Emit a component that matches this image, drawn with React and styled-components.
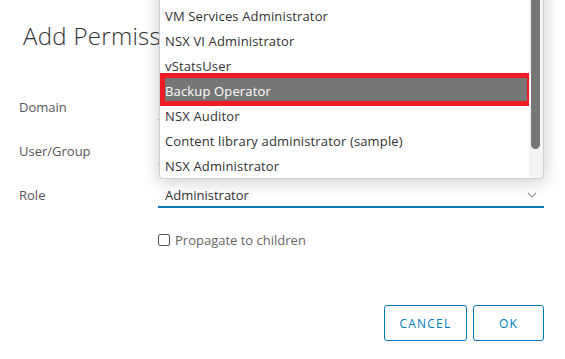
import React from "react";
import styled, { createGlobalStyle } from "styled-components";

const Global = createGlobalStyle`
  html, body { margin: 0; padding: 0; background: #ffffff; overflow: hidden; }
  body { font-family: "Open Sans", "Noto Sans", sans-serif; color: #333; }
  * { box-sizing: border-box; }
`;

const Dialog = styled.div`
  width: 565px;
  height: 359px;
  background: #fff;
  padding: 20px 21px 18px 19px;
  display: flex;
  flex-direction: column;
`;

const Title = styled.h2`
  margin: 0 0 0 4px;
  font-size: 24px;
  line-height: 32px;
  font-weight: 300;
  color: #313131;
  letter-spacing: 0.3px;
`;

const Form = styled.div`
  margin-top: 33px;
  display: grid;
  grid-template-columns: 139px 386px;
  grid-auto-rows: 44px;
`;

const Label = styled.div`
  font-size: 13px;
  color: #565656;
  display: flex;
  align-items: center;
`;

const Field = styled.div`
  position: relative;
  display: flex;
  align-items: center;
`;

const Select = styled.div`
  width: 100%;
  height: 24px;
  margin-top: 2px;
  display: flex;
  align-items: center;
  justify-content: space-between;
  padding: 0 7px 0 7px;
  font-size: 13px;
  color: #313131;
  border-bottom: ${(p) => (p.$active ? "2px solid #0079b8" : "1px solid #b3b3b3")};
`;

const Chevron = () => (
  <svg width="10" height="6" viewBox="0 0 10 6">
    <polyline points="1,1 5,5 9,1" fill="none" stroke="#9a9a9a" strokeWidth="1.1" />
  </svg>
);

const Menu = styled.div`
  position: absolute;
  left: 1px;
  right: 0;
  bottom: calc(100% - 6px);
  display: flex;
  background: #fff;
  border: 1px solid #cfcfcf;
  border-top: none;
  border-radius: 0 0 4px 4px;
  box-shadow: 0 2px 18px rgba(0, 0, 0, 0.22);
  z-index: 5;
`;

const List = styled.ul`
  list-style: none;
  margin: 0;
  padding: 0;
  flex: 1;
`;

const Item = styled.li`
  position: relative;
  height: 25px;
  display: flex;
  align-items: center;
  padding-left: 5px;
  font-size: 13px;
  letter-spacing: 0.15px;
  color: ${(p) => (p.$selected ? "#ffffff" : "#313131")};
  background: ${(p) => (p.$selected ? "#767676" : "transparent")};
  white-space: nowrap;
  ${(p) =>
    p.$selected &&
    `
    &::after {
      content: "";
      position: absolute;
      top: -5px;
      bottom: -3px;
      left: 0;
      right: 0;
      border-style: solid;
      border-color: #ed1c24;
      border-width: 5px 2px 5px 5px;
    }
  `}
`;

const Track = styled.div`
  width: 14px;
  background: #f4f4f4;
  display: flex;
  justify-content: center;
  border-bottom-right-radius: 4px;
`;

const Thumb = styled.div`
  width: 9px;
  height: 196px;
  margin-left: -2px;
  background: #777;
  border-radius: 0 0 5px 5px;
`;

const CheckRow = styled.label`
  grid-column: 2;
  display: flex;
  align-items: center;
  gap: 5px;
  padding-top: 1px;
  font-size: 13px;
  color: #666;
  height: 44px;
`;

const Box = styled.span`
  width: 12px;
  height: 12px;
  border: 1px solid #555;
  border-radius: 2px;
  background: #fff;
`;

const Footer = styled.div`
  margin-top: auto;
  display: flex;
  justify-content: flex-end;
  gap: 6px;
`;

const Button = styled.button`
  height: 36px;
  width: ${(p) => p.$w}px;
  border: 1px solid #0079b8;
  border-radius: 3px;
  background: #fff;
  color: #0079b8;
  font-family: "Open Sans", "Noto Sans", sans-serif;
  font-size: 12px;
  font-weight: 500;
  letter-spacing: 1.2px;
  text-transform: uppercase;
  padding: 0;
`;

const roles = [
  "Read-only",
  "No access",
  "VM Services Administrator",
  "NSX VI Administrator",
  "vStatsUser",
  "Backup Operator",
  "NSX Auditor",
  "Content library administrator (sample)",
  "NSX Administrator",
];

export default function App() {
  return (
    <>
      <Global />
      <Dialog>
        <Title>Add Permission</Title>
        <Form>
          <Label>Domain</Label>
          <Field>
            <Select />
          </Field>
          <Label>User/Group</Label>
          <Field>
            <Select />
          </Field>
          <Label>Role</Label>
          <Field>
            <Select $active>
              Administrator
              <Chevron />
            </Select>
            <Menu>
              <List>
                {roles.map((r) => (
                  <Item key={r} $selected={r === "Backup Operator"}>
                    {r}
                  </Item>
                ))}
              </List>
              <Track>
                <Thumb />
              </Track>
            </Menu>
          </Field>
          <CheckRow>
            <Box />
            Propagate to children
          </CheckRow>
        </Form>
        <Footer>
          <Button $w={83}>Cancel</Button>
          <Button $w={71}>OK</Button>
        </Footer>
      </Dialog>
    </>
  );
}
